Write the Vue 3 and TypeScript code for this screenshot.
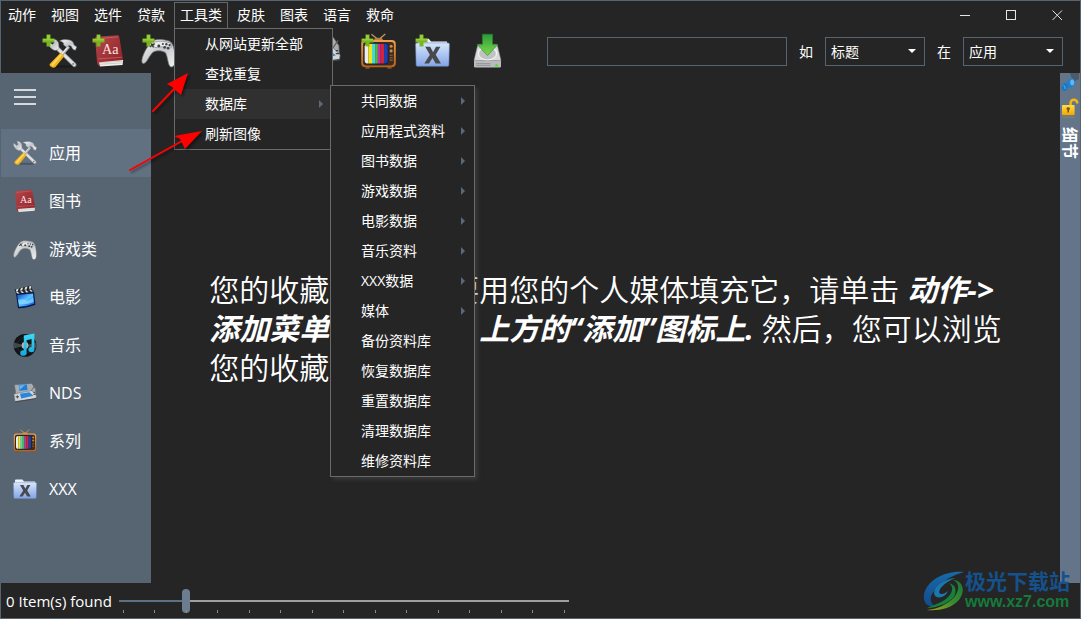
<script setup lang="ts">
import { ref } from 'vue'

interface MenuEntry {
  label: string
  children?: MenuEntry[]
}
interface Tool {
  icon: string
  label: string
  x: number
  y: number
  size: number
  add: boolean
}

const databaseMenu: MenuEntry[] = [
  { label: '共同数据', children: [] },
  { label: '应用程式资料', children: [] },
  { label: '图书数据', children: [] },
  { label: '游戏数据', children: [] },
  { label: '电影数据', children: [] },
  { label: '音乐资料', children: [] },
  { label: 'XXX数据', children: [] },
  { label: '媒体', children: [] },
  { label: '备份资料库' },
  { label: '恢复数据库' },
  { label: '重置数据库' },
  { label: '清理数据库' },
  { label: '维修资料库' },
]

const toolsMenu: MenuEntry[] = [
  { label: '从网站更新全部' },
  { label: '查找重复' },
  { label: '数据库', children: databaseMenu },
  { label: '刷新图像' },
]

const menus: MenuEntry[] = [
  { label: '动作' },
  { label: '视图' },
  { label: '选件' },
  { label: '贷款' },
  { label: '工具类', children: toolsMenu },
  { label: '皮肤' },
  { label: '图表' },
  { label: '语言' },
  { label: '救命' },
]

const toolGroups: Tool[][] = [
  [
    { icon: 'tools', label: '添加应用', x: 7, y: 6, size: 29, add: true },
    { icon: 'book', label: '添加图书', x: 1, y: 1, size: 34, add: true },
    { icon: 'pad', label: '添加游戏', x: 0, y: 1, size: 35, add: true },
    { icon: 'movie', label: '添加电影', x: 1, y: 1, size: 34, add: true },
    { icon: 'music', label: '添加音乐', x: 1, y: 1, size: 34, add: true },
  ],
  [
    { icon: 'nds', label: '添加 NDS', x: 0, y: 1, size: 35, add: true },
    { icon: 'tv', label: '添加系列', x: 0, y: 0, size: 37, add: true },
    { icon: 'folder', label: '添加 XXX', x: 1, y: 2, size: 35, add: true },
    { icon: 'drive', label: '备份', x: 3, y: 0, size: 36, add: false },
  ],
]

const categories = [
  { icon: 'tools', label: '应用' },
  { icon: 'book', label: '图书' },
  { icon: 'pad', label: '游戏类' },
  { icon: 'movie', label: '电影' },
  { icon: 'music', label: '音乐' },
  { icon: 'nds', label: 'NDS' },
  { icon: 'tv', label: '系列' },
  { icon: 'folder', label: 'XXX' },
]

const openMenu = ref('工具类')
const activeCategory = ref('应用')
const query = ref('')
const field = ref('标题')
const scope = ref('应用')
const zoom = ref(2)

function toggleMenu(label: string) {
  openMenu.value = openMenu.value === label ? '' : label
}
</script>

<template>
  <div class="window">
    <svg class="sprite" aria-hidden="true">
      <defs>
        <linearGradient id="gSteel" x1="0" y1="0" x2="1" y2="1">
          <stop offset="0" stop-color="#fafafa" />
          <stop offset="0.5" stop-color="#c4c7ca" />
          <stop offset="1" stop-color="#f2f2f2" />
        </linearGradient>
        <linearGradient id="gRed" x1="0" y1="0" x2="1" y2="1">
          <stop offset="0" stop-color="#b5474b" />
          <stop offset="1" stop-color="#8f1f26" />
        </linearGradient>
        <linearGradient id="gFolder" x1="0" y1="0" x2="0" y2="1">
          <stop offset="0" stop-color="#d6e6fb" />
          <stop offset="1" stop-color="#84a5e6" />
        </linearGradient>
        <linearGradient id="gWood" x1="0" y1="0" x2="0" y2="1">
          <stop offset="0" stop-color="#f0a04c" />
          <stop offset="1" stop-color="#b8621a" />
        </linearGradient>
        <linearGradient id="gBlue" x1="0" y1="0" x2="1" y2="1">
          <stop offset="0" stop-color="#0a49c8" />
          <stop offset="0.5" stop-color="#5cc4ff" />
          <stop offset="1" stop-color="#083fd0" />
        </linearGradient>
        <linearGradient id="gCyan" x1="0" y1="0" x2="0" y2="1">
          <stop offset="0" stop-color="#3ddcf6" />
          <stop offset="1" stop-color="#17a6dd" />
        </linearGradient>
        <linearGradient id="gGreen" x1="0" y1="0" x2="0" y2="1">
          <stop offset="0" stop-color="#2c9a38" />
          <stop offset="1" stop-color="#7ddc4c" />
        </linearGradient>
        <linearGradient id="gGold" x1="0" y1="0" x2="0" y2="1">
          <stop offset="0" stop-color="#ffdc4a" />
          <stop offset="1" stop-color="#f5a800" />
        </linearGradient>
        <linearGradient id="gWave" x1="0" y1="0" x2="0" y2="1">
          <stop offset="0" stop-color="#176aa8" />
          <stop offset="1" stop-color="#144a8a" />
        </linearGradient>
        <linearGradient id="gLeaf" x1="0" y1="1" x2="1" y2="0">
          <stop offset="0" stop-color="#a7a51e" />
          <stop offset="0.5" stop-color="#3a8a2d" />
          <stop offset="1" stop-color="#157a3a" />
        </linearGradient>
      </defs>

      <symbol id="plus" viewBox="0 0 13 13">
        <path d="M4.5 0.5h4v4h4v4h-4v4h-4v-4h-4v-4h4z" fill="#78b51f" />
        <path d="M5 1h3v4h4v1.5H1V5h4z" fill="#96cc3c" />
      </symbol>

      <symbol id="tools" viewBox="0 0 24 24">
        <ellipse cx="13" cy="22.8" rx="10" ry="1" fill="#000" opacity="0.25" />
        <path d="M6 6 21.8 21.4" stroke="#84888c" stroke-width="3.6" stroke-linecap="round" />
        <path d="M6 6 21.6 21.2" stroke="#dfe1e3" stroke-width="2.4" stroke-linecap="round" />
        <path d="M0.6 2.2 3.6 4.6 5.2 3.4 4 0.2C7 0 9.2 2.4 8.8 5.2L9 8.2 6.4 9.4C3.2 9 0.2 6 0.6 2.2Z" fill="url(#gSteel)" stroke="#8b8f92" stroke-width="0.4" />
        <circle cx="20.8" cy="20.6" r="0.8" fill="#777" />
        <path d="M17.2 6.4 10.6 14.2" stroke="#a8abad" stroke-width="2.4" />
        <path d="M16.8 6.2 10.4 13.8" stroke="#eceded" stroke-width="1" />
        <path d="M10.4 11.4 13.6 14 6.2 23.2Q4 24.4 2.2 22.8 0.8 21.6 1.6 20.4Z" fill="#f3b51b" />
        <path d="M10.6 12.4 11.6 13.2 4 22.4 2.8 21Z" fill="#ffd866" />
        <path d="M9.6 1.6C13 -0.2 18 0 20.6 2.4L21.6 5 23.8 6.6 22.6 9.4 20.6 8.4 19.2 6C17.4 4.8 16.2 5.6 15.6 7L12.8 4.8C13.6 3.2 12 2.2 9.6 1.6Z" fill="url(#gSteel)" stroke="#75797c" stroke-width="0.4" />
      </symbol>

      <symbol id="book" viewBox="0 0 24 24">
        <path d="M4 18.4 5.6 23 21.6 21.8 22 18.4Z" fill="#f0eeea" />
        <path d="M5 20.2 21.8 19.2M5.4 21.4 21.8 20.4" stroke="#b9b3ad" stroke-width="0.4" />
        <path d="M2.2 3.2Q2.2 2.2 3.4 2L18 0.8Q19 0.8 19.2 1.8L22 18.4 5 20 5.4 22.8Q4 22.6 3.6 20.6Z" fill="url(#gRed)" />
        <path d="M3.4 3.4 18.4 2M4.4 17.6 21 16.4" stroke="#cf7b7d" stroke-width="0.4" />
        <text x="7" y="14" class="book-letters">Aa</text>
      </symbol>

      <symbol id="pad" viewBox="0 0 24 24">
        <path d="M0.6 19.2C0.2 15.6 4.4 8.2 7 5.6 8.6 3.6 13 3.2 18.4 4.6 21.6 5 22.8 9 23.4 16 23.6 21 22.6 22.8 20.6 22.6 18.4 22.2 18.6 16 16.8 12.8 14.2 11.2 10.4 11.2 8.4 12.4 5.4 15 4.2 19.6 2 20.2 1.2 20.4 0.8 19.8 0.6 19.2Z" fill="url(#gSteel)" stroke="#75797c" stroke-width="0.5" />
        <path d="M7.4 6.2C11 4.6 15 4.6 20.2 6.2L21 9 13.6 8.8 9.6 9.4Z" fill="#e9eaeb" stroke="#555" stroke-width="0.3" />
        <path d="M6 8.8 9.4 6.6M7 6.6 8.6 9.2" stroke="#333" stroke-width="0.9" />
        <g fill="#3f4245">
          <circle cx="15" cy="6.8" r="0.7" /><circle cx="17.4" cy="7" r="0.8" /><circle cx="19.6" cy="7.6" r="0.8" />
          <circle cx="16.2" cy="9.2" r="0.9" /><circle cx="18.6" cy="9.8" r="0.9" /><circle cx="12.2" cy="8.2" r="1" />
        </g>
      </symbol>

      <symbol id="movie" viewBox="0 0 24 24">
        <path d="M3 8.6 21 6.8 22.4 19.8Q13 23.6 5 23.2Z" fill="#071a50" />
        <path d="M4.2 10 20 8.4 21.2 18.8Q13 21.8 6 21.8Z" fill="url(#gBlue)" />
        <path d="M5 15Q11 13.4 12.6 15.4 16 16.8 20 12.4L20.8 17Q14 20 6 19Z" fill="#8fe3ff" opacity="0.65" />
        <path d="M1.6 4.4 18 0.6 19.4 4.4 21 6.8 3 9Z" fill="#26282a" />
        <path d="M3.4 4.2 5.6 3.6 4.8 6.2 2.8 6.6ZM7.8 3.2 10 2.6 9.2 5.2 7 5.8ZM12.2 2.2 14.4 1.6 13.6 4.4 11.4 4.8ZM16.4 1.2 18 1 18.2 3.4 16 3.8ZM4.6 6.8 6.6 8.4 4.6 8.6 3 7ZM9 6 11 7.8 9 8 7.4 6.4ZM13.4 5.2 15.4 7.2 13.4 7.4 11.8 5.6ZM17.6 4.4 19.8 6.6 18 6.8 16.2 4.8Z" fill="#e2e4e6" />
      </symbol>

      <symbol id="music" viewBox="0 0 24 24">
        <circle cx="12" cy="12.4" r="11.4" fill="#111416" />
        <path d="M12 12.4 1 9.4A11.4 11.4 0 0 0 1 15.6ZM12 12.4 23 9.4A11.4 11.4 0 0 1 23 15.6Z" fill="#5a5f62" opacity="0.7" />
        <circle cx="12" cy="12.4" r="8" fill="none" stroke="#33383b" stroke-width="0.5" />
        <circle cx="12" cy="12.4" r="3.4" fill="#aeb3b5" />
        <circle cx="12" cy="12.4" r="1" fill="#222" />
        <path d="M10.8 2.6 21.4 0.4V16.4A3 2.6 0 1 1 18.6 14V6L13.6 7.2V19.6A3.2 2.8 0 1 1 10.8 17.2Z" fill="url(#gCyan)" />
      </symbol>

      <symbol id="nds" viewBox="0 0 24 24">
        <path d="M1.4 3.8 18.8 2.4 22.6 8 22.8 14 3 14Z" fill="#a9adb1" stroke="#5d6164" stroke-width="0.5" />
        <path d="M5.6 4 13.8 3.4 14.6 9 6.6 9.8Z" fill="#1f7fd8" />
        <path d="M6 4.4 12 4 7 8.4Z" fill="#69b7f6" />
        <path d="M1 13 18.8 9.6 23.4 14.4 23 17.6 2 20.4Z" fill="#d2d4d6" stroke="#6a6e71" stroke-width="0.5" />
        <path d="M2 20.4 23.2 17 23 18 2.4 21.6Z" fill="#44484b" />
        <path d="M7 12.8 16.4 11.2 20.4 14.8 8.2 17.4Z" fill="#2887dc" />
        <path d="M2.8 15.8H6M4.4 14.4V17.4M20.4 11.4H22M20.4 13.4H22.6" stroke="#3d4144" stroke-width="0.9" />
        <path d="M18.4 9.6 22 4.4" stroke="#5d6164" stroke-width="0.9" />
      </symbol>

      <symbol id="tv" viewBox="0 0 24 24">
        <path d="M12 4.4 7.4 0.8M12 4.4 16.4 0.6" stroke="#c59a5c" stroke-width="0.8" />
        <ellipse cx="12" cy="4.2" rx="2.8" ry="1.2" fill="#b98546" />
        <path d="M4 21.4 3.4 23.2H6L6.6 21.8ZM20 21.4 20.6 23.2H18L17.4 21.8Z" fill="#8a4d18" />
        <rect x="0.8" y="4.6" width="22.4" height="17.6" rx="2.6" fill="url(#gWood)" />
        <rect x="2" y="5.8" width="20" height="15.2" rx="1.8" fill="#3b2c22" />
        <rect x="2.8" y="6.6" width="15.6" height="13.6" rx="2" fill="#0b1c3c" />
        <path d="M4.6 7H5.4V19.8H4.2Q3 19.4 3 18V8.6Q3.2 7.2 4.6 7Z" fill="#eceeec" />
        <path d="M5.4 7H7.8V19.8H5.4Z" fill="#f2e51b" />
        <path d="M7.8 7H9.8V19.8H7.8Z" fill="#47d6dc" />
        <path d="M9.8 7H11.6V19.8H9.8Z" fill="#55b83c" />
        <path d="M11.6 7H13.4V19.8H11.6Z" fill="#c32fb0" />
        <path d="M13.4 7H15.6V19.8H13.4Z" fill="#d82432" />
        <path d="M15.6 7H16.6Q18 7.2 18 8.6V18Q18 19.6 16.6 19.8H15.6Z" fill="#1e3fae" />
        <circle cx="20.2" cy="8.6" r="1" fill="#d28a3c" />
        <circle cx="20.2" cy="11.6" r="1" fill="#d28a3c" />
        <path d="M19.2 14.4H21.2M19.2 16H21.2M19.2 17.6H21.2" stroke="#98632f" stroke-width="0.7" />
      </symbol>

      <symbol id="folder" viewBox="0 0 24 24">
        <path d="M2 6V3.6Q2 2.6 3 2.6H9.4L11 4.4H22V8H2Z" fill="#f1f4f8" />
        <path d="M0.4 6.4Q0.4 5.4 1.4 5.4H22.6Q23.6 5.4 23.6 6.4L23.2 20.6Q23.2 21.4 22.4 21.4H1.6Q0.8 21.4 0.8 20.6Z" fill="url(#gFolder)" stroke="#6c88c4" stroke-width="0.4" />
        <path d="M7 8H10.4L12.4 11.8 14.4 8H17.4L14.2 13.6 17.8 19.6H14.2L12 15.8 9.6 19.6H6.4L10.2 13.6Z" fill="#48494c" />
      </symbol>

      <symbol id="drive" viewBox="0 0 24 24">
        <path d="M4.6 7.6H17.4L20 18.4H2Z" fill="#d9dadb" stroke="#8c8f91" stroke-width="0.4" />
        <ellipse cx="11" cy="13.6" rx="6" ry="4.4" fill="#c0c2c4" stroke="#f7f7f7" stroke-width="0.7" />
        <path d="M2 18.4H20V22.2Q20 23 19 23H3Q2 23 2 22.2Z" fill="#b9bbbd" />
        <path d="M3.4 20.4H13M3.4 21.6H13" stroke="#7a7c7e" stroke-width="0.4" />
        <circle cx="17" cy="21.6" r="0.9" fill="#4fe41d" />
        <path d="M7.6 0.8H14.4V7.8H17.8L11 15 4.2 7.8H7.6Z" fill="url(#gGreen)" stroke="#277f2b" stroke-width="0.4" />
      </symbol>
    </svg>

    <header class="titlebar">
      <nav class="menubar" role="menubar" aria-label="主菜单">
        <div v-for="menu in menus" :key="menu.label" class="menu">
          <button
            type="button"
            class="menu-button"
            :class="{ open: menu.children && openMenu === menu.label }"
            role="menuitem"
            @click="toggleMenu(menu.label)"
          >{{ menu.label }}</button>
          <div v-if="menu.children && openMenu === menu.label" class="dropdown" role="menu">
            <div v-for="entry in menu.children" :key="entry.label" class="entry-wrap">
              <button type="button" class="entry" :class="{ current: entry.children }" role="menuitem">
                {{ entry.label }}
                <span v-if="entry.children" class="arrow"></span>
              </button>
              <div v-if="entry.children" class="submenu" role="menu">
                <button v-for="sub in entry.children" :key="sub.label" type="button" class="entry" role="menuitem">
                  {{ sub.label }}
                  <span v-if="sub.children" class="arrow"></span>
                </button>
              </div>
            </div>
          </div>
        </div>
      </nav>
      <div class="window-buttons">
        <button type="button" aria-label="最小化">
          <svg width="11" height="11" viewBox="0 0 11 11"><path d="M0 5.5H10" stroke="#e6e6e6" /></svg>
        </button>
        <button type="button" aria-label="最大化">
          <svg width="11" height="11" viewBox="0 0 11 11"><rect x="0.5" y="0.5" width="9" height="9" fill="none" stroke="#e6e6e6" /></svg>
        </button>
        <button type="button" aria-label="关闭">
          <svg width="11" height="11" viewBox="0 0 11 11"><path d="M0.5 0.5 10 10M10 0.5 0.5 10" stroke="#e6e6e6" /></svg>
        </button>
      </div>
    </header>

    <div class="toolbar">
      <div v-for="(group, g) in toolGroups" :key="g" class="tool-group" :class="{ wide: g === 1 }">
        <button v-for="tool in group" :key="tool.icon" type="button" class="tool" :aria-label="tool.label">
          <svg width="36" height="36" viewBox="0 0 36 36">
            <use :href="'#' + tool.icon" :x="tool.x" :y="tool.y" :width="tool.size" :height="tool.size" />
            <use v-if="tool.add" href="#plus" x="1" y="1" width="13" height="13" />
          </svg>
        </button>
      </div>
      <form class="search" @submit.prevent>
        <input v-model="query" class="query" type="text" aria-label="搜索" />
        <label for="field">如</label>
        <span class="select">
          <select id="field" v-model="field"><option>标题</option></select>
          <span class="caret"></span>
        </span>
        <label for="scope">在</label>
        <span class="select">
          <select id="scope" v-model="scope"><option>应用</option></select>
          <span class="caret"></span>
        </span>
      </form>
    </div>

    <div class="body">
      <aside class="sidebar">
        <button type="button" class="hamburger" aria-label="菜单"><i></i><i></i><i></i></button>
        <button
          v-for="item in categories"
          :key="item.label"
          type="button"
          class="category"
          :class="{ active: activeCategory === item.label }"
          @click="activeCategory = item.label"
        >
          <svg width="24" height="24" viewBox="0 0 24 24"><use :href="'#' + item.icon" width="24" height="24" /></svg>
          <span>{{ item.label }}</span>
        </button>
      </aside>

      <main class="content">
        <p class="message">
          您的收藏是空的，要用您的个人媒体填充它，请单击 <em>动作-&gt;</em><br />
          <em>添加菜单或按一下，上方的“添加”图标上.</em> 然后，您可以浏览<br />
          您的收藏.
        </p>
      </main>

      <aside class="details">
        <button type="button" aria-label="固定">
          <svg width="18" height="20" viewBox="0 0 18 20">
            <path d="M9 0H18V6L12 9Z" fill="#4c5a69" />
            <path d="M5.6 11 9.6 7 12 12Z" fill="#0b62b4" />
            <ellipse cx="3.8" cy="14" rx="3" ry="4" transform="rotate(20 3.8 14)" fill="#1478c8" />
            <ellipse cx="10" cy="10" rx="3.8" ry="4.8" transform="rotate(20 10 10)" fill="#1b83d6" />
            <ellipse cx="11.2" cy="9.4" rx="2" ry="2.8" fill="#63b6f2" />
            <path d="M2.4 12.4Q4.6 12.8 4.2 16" stroke="#5cb0ef" fill="none" />
          </svg>
        </button>
        <button type="button" aria-label="解锁">
          <svg width="18" height="22" viewBox="0 0 18 22">
            <path d="M9.6 8.6V5.6A3.4 3.6 0 0 1 16.2 5.4V6.4" fill="none" stroke="#f2b90e" stroke-width="2.4" />
            <rect x="1" y="8" width="12.6" height="10" rx="1" fill="url(#gGold)" />
            <rect x="1" y="18.4" width="12.6" height="3" fill="#8a8a66" opacity="0.4" />
            <path d="M7.2 10.4A1.3 1.3 0 0 1 8 13V15.6H6.4V13A1.3 1.3 0 0 1 7.2 10.4Z" fill="#6f5a1a" />
          </svg>
        </button>
        <button type="button" class="details-tab">细节</button>
      </aside>
    </div>

    <footer class="statusbar">
      <span class="count">0 Item(s) found</span>
      <div class="slider">
        <input v-model.number="zoom" type="range" min="0" max="14" aria-label="缩放" :style="{ '--fill': (zoom / 14) * 100 + '%' }" />
        <div class="ticks"><i v-for="n in 15" :key="n"></i></div>
      </div>
    </footer>

    <div class="brand">
      <svg width="42" height="42" viewBox="0 0 44 44" aria-hidden="true">
        <path d="M43 2C24 0 4 10 1 26 0 35 5 39 12 38 6 33 7 26 14 20 22 10 32 5 43 2Z" fill="url(#gWave)" />
        <path d="M34 8C20 10 10 19 12 26 14 31 24 29 26 22 22 26 17 26 17 23 17 18 25 12 34 8Z" fill="#1b78ad" />
        <path d="M30 10C38 12 39 20 33 28 26 36 15 41 4 42 15 43 30 41 38 31 45 21 42 11 30 10Z" fill="url(#gLeaf)" />
        <path d="M27 14C34 18 30 28 20 33 14 36 8 38 4 40 16 39 28 35 33 27 36 20 33 15 27 14Z" fill="#16803c" />
      </svg>
      <div class="brand-text">
        <span class="brand-name">极光下载站</span>
        <span class="brand-url">www.xz7.com</span>
      </div>
    </div>

    <svg class="pointers" width="90" height="110" viewBox="0 0 90 110" aria-hidden="true">
      <path d="M28 43 50 20M5 102 57 73" stroke="#f00" stroke-width="2" stroke-linecap="round" />
      <path d="M63 5 56 27 50 22 47 19 42 16ZM77 63 60 81 57 75 55 71 49 68Z" fill="#f00" />
    </svg>
  </div>
</template>

<style>
html,
body {
  background: #252525;
}
</style>

<style scoped>
.window {
  position: relative;
  box-sizing: border-box;
  min-height: 100vh;
  display: flex;
  flex-direction: column;
  border: 1px solid #566472;
  background: #252525;
  color: #fff;
  font-family: "Open Sans", "Noto Sans CJK SC", sans-serif;
  font-size: 14px;
}
button,
input,
select {
  box-sizing: border-box;
  margin: 0;
  padding: 0;
  border: 0;
  border-radius: 0;
  background: none;
  color: inherit;
  font: inherit;
}
svg {
  display: block;
}
.sprite {
  position: absolute;
  width: 0;
  height: 0;
}
.book-letters {
  font-family: "Liberation Serif", serif;
  font-size: 10px;
  fill: #f6e4e2;
}
.titlebar {
  display: flex;
  justify-content: space-between;
  height: 28px;
}
.menubar {
  display: flex;
  gap: 3px;
  padding: 1px;
}
.menu {
  position: relative;
}
.menu-button {
  height: 27px;
  padding: 0 5px 1px;
  border: 1px solid transparent;
  line-height: 20px;
  white-space: nowrap;
}
.menu-button.open {
  border-color: #666;
}
.dropdown,
.submenu {
  position: absolute;
  z-index: 3;
  box-sizing: border-box;
  border: 1px solid #6a6a6a;
  background: #252525;
}
.dropdown {
  top: 26px;
  left: 0;
  width: 159px;
}
.submenu {
  top: -4px;
  left: 155px;
  width: 145px;
  box-shadow: 3px 3px 4px rgba(90, 90, 90, 0.35);
}
.entry-wrap {
  position: relative;
}
.entry {
  display: flex;
  align-items: center;
  justify-content: space-between;
  width: 100%;
  height: 30px;
  padding: 0 9px 0 30px;
  line-height: 20px;
  text-align: left;
  white-space: nowrap;
}
.entry.current {
  background: #303030;
}
.arrow {
  border-top: 4px solid transparent;
  border-bottom: 4px solid transparent;
  border-left: 4px solid #5b6977;
}
.window-buttons {
  display: flex;
}
.window-buttons button {
  display: grid;
  place-items: center;
  width: 46px;
}
.toolbar {
  display: flex;
  align-items: center;
  height: 44px;
  padding: 0 17px 0 40px;
}
.tool-group {
  display: flex;
  gap: 14px;
}
.tool-group.wide {
  gap: 18px;
  margin-left: 29px;
}
.search {
  display: flex;
  flex: 1;
  align-items: center;
  gap: 12px;
  margin-left: 43px;
}
.query {
  flex: 1;
  min-width: 0;
  height: 29px;
  padding: 0 5px;
  border: 1px solid #566472;
}
.select {
  position: relative;
  width: 100px;
}
.select select {
  display: block;
  width: 100%;
  height: 29px;
  padding: 0 24px 0 5px;
  border: 1px solid #566472;
  appearance: none;
}
.caret {
  position: absolute;
  top: 12px;
  right: 9px;
  border-top: 4px solid #fff;
  border-right: 4px solid transparent;
  border-left: 4px solid transparent;
  pointer-events: none;
}
.body {
  display: flex;
  flex: 1;
}
.sidebar {
  width: 150px;
  background: #576573;
}
.hamburger {
  display: flex;
  flex-direction: column;
  gap: 5px;
  width: 100%;
  height: 56px;
  padding: 16px 13px;
}
.hamburger i {
  width: 22px;
  height: 2px;
  background: #d5d9dd;
}
.category {
  display: flex;
  align-items: center;
  gap: 12px;
  width: 100%;
  height: 48px;
  padding: 0 12px;
  font-size: 16px;
  line-height: 24px;
}
.category.active {
  background: #617182;
}
.content {
  flex: 1;
  display: grid;
  place-items: center;
}
.message {
  margin: 0;
  font-size: 30px;
  font-weight: 350;
  line-height: 39px;
  white-space: nowrap;
}
.message em {
  font-weight: 700;
}
.details {
  display: flex;
  flex-direction: column;
  align-items: center;
  gap: 4px;
  width: 20px;
  background: #64758a;
}
.details-tab {
  margin-top: 4px;
  font-size: 16px;
  font-weight: 700;
  line-height: 20px;
  writing-mode: vertical-rl;
  text-orientation: sideways;
}
.statusbar {
  display: flex;
  align-items: center;
  gap: 7px;
  height: 35px;
  padding-left: 5px;
}
.count {
  font-size: 15px;
}
.slider {
  position: relative;
  width: 450px;
}
.slider input {
  display: block;
  width: 100%;
  height: 24px;
  appearance: none;
}
.slider input::-webkit-slider-runnable-track {
  height: 2px;
  background: linear-gradient(to right, #5d6f83 var(--fill), #a09e9c var(--fill));
}
.slider input::-webkit-slider-thumb {
  width: 8px;
  height: 24px;
  margin-top: -11px;
  border-radius: 4px;
  background: #6c7d92;
  appearance: none;
}
.ticks {
  position: absolute;
  right: 4px;
  bottom: 0;
  left: 4px;
  display: flex;
  justify-content: space-between;
  pointer-events: none;
}
.ticks i {
  width: 1px;
  height: 3px;
  background: #8a8a8a;
}
.brand {
  position: absolute;
  right: 10px;
  bottom: 6px;
  display: flex;
  align-items: center;
}
.brand-text {
  display: flex;
  flex-direction: column;
}
.brand-name {
  color: #15518c;
  font-size: 21px;
  font-weight: 700;
  line-height: 22px;
}
.brand-url {
  color: #157a3a;
  font-family: "Liberation Sans", sans-serif;
  font-size: 16px;
  font-weight: 700;
  line-height: 20px;
}
.pointers {
  position: absolute;
  top: 67px;
  left: 124px;
  z-index: 4;
  pointer-events: none;
  filter: drop-shadow(2px 2px 1px rgba(0, 0, 0, 0.4));
}
</style>
